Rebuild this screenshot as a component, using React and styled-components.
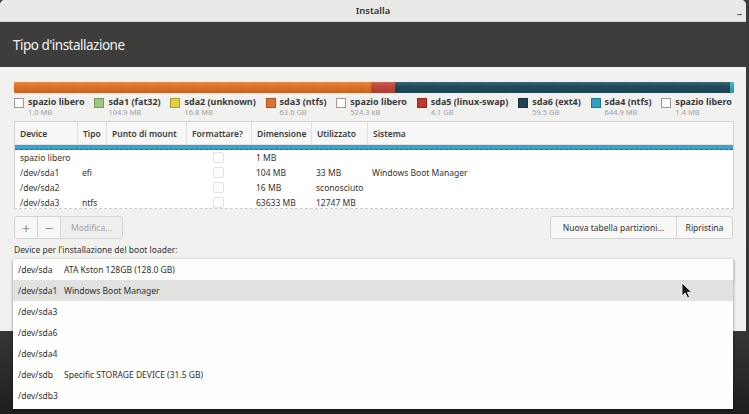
import styled, { createGlobalStyle } from "styled-components";

const GlobalStyle = createGlobalStyle`
  html, body {
    margin: 0;
    padding: 0;
    background: #2f2f2f;
    font-family: "Noto Sans", "Open Sans", sans-serif;
  }
`;

const Desktop = styled.div`
  position: relative;
  width: 749px;
  height: 414px;
  overflow: hidden;
  background: linear-gradient(180deg, #3b3b3b 0%, #363636 80%, #1e1e1e 100%);
`;

const Window = styled.div`
  width: 746px;
  height: 331px;
  overflow: hidden;
  background: #f1f1f0;
  border-radius: 5px 5px 0 0;
  display: flex;
  flex-direction: column;
`;

const TitleBar = styled.div`
  height: 22px;
  flex: none;
  position: relative;
  display: flex;
  align-items: center;
  justify-content: center;
  background: #e9e9e8;
  border-bottom: 1px solid #d4d4d4;
  box-sizing: border-box;
  font-size: 9.5px;
  font-weight: 600;
  color: #333;
`;

const MinBtn = styled.span`
  position: absolute;
  right: 4px;
  top: 7px;
  font-size: 10px;
  color: #555;
`;

const Header = styled.div`
  height: 45px;
  flex: none;
  background: #3d3d3c;
  display: flex;
  align-items: center;
  padding-left: 13px;
  color: #f3f3f3;
  font-size: 13.5px;
  letter-spacing: -0.5px;
`;

const Body = styled.div`
  padding: 15px 12px 0 14px;
  display: flex;
  flex-direction: column;
`;

const Bar = styled.div`
  height: 11px;
  width: 720px;
  display: flex;
  border-radius: 1px;
  overflow: hidden;
  position: relative;
  &::after {
    content: "";
    position: absolute;
    inset: 0;
    background:
      linear-gradient(180deg, rgba(255,255,255,0.15) 0%, rgba(255,255,255,0) 40%, rgba(0,0,0,0.12) 100%),
      repeating-linear-gradient(90deg, rgba(0,0,0,0) 0 11px, rgba(0,0,0,0.05) 11px 12px);
  }
`;

const Segment = styled.div`
  width: ${(p) => p.$w}px;
  background: ${(p) => p.$c};
  flex: none;
`;

const Legend = styled.div`
  width: 718px;
  margin-top: 4px;
  display: flex;
  justify-content: space-between;
`;

const LegendItem = styled.div`
  display: flex;
  gap: 4px;
`;

const Swatch = styled.span`
  width: 8px;
  height: 8px;
  margin-top: 1px;
  flex: none;
  background: ${(p) => p.$c};
  border: 1px solid ${(p) => (p.$c === "#fff" ? "#9a9a9a" : "rgba(0,0,0,0.25)")};
`;

const LegendText = styled.div`
  display: flex;
  flex-direction: column;
  line-height: 10px;
`;

const LegendName = styled.span`
  font-size: 9px;
  font-weight: 700;
  color: #3a3a3a;
`;

const LegendSize = styled.span`
  font-size: 7.5px;
  color: #a0a0a0;
`;

const Table = styled.div`
  margin-top: 4px;
  width: 720px;
  height: 88px;
  box-sizing: border-box;
  background: #fff;
  border: 1px solid #d3d3d3;
  border-bottom: 1px dashed #c9c9c9;
  overflow: hidden;
`;

const cols = "62px 29px 80px 65px 60px 56px 1fr";

const HeadRow = styled.div`
  display: grid;
  grid-template-columns: ${cols};
  height: 22px;
  background: #f7f7f7;
  border-bottom: 1px solid #e2e2e2;
`;

const HeadCell = styled.div`
  display: flex;
  align-items: center;
  padding-left: 5px;
  font-size: 8.5px;
  font-weight: 600;
  color: #3c3c3c;
  border-left: ${(p) => (p.$first ? "none" : "1px solid #e0e0e0")};
`;

const SelectedSliver = styled.div`
  height: 5px;
  background: #3aa2cb;
  border-bottom: 1px dashed #1f6f93;
  box-sizing: border-box;
`;

const Row = styled.div`
  display: grid;
  grid-template-columns: ${cols};
  height: 15px;
  align-items: center;
`;

const Cell = styled.div`
  padding-left: 5px;
  font-size: 8.5px;
  color: #333;
  white-space: nowrap;
`;

const CheckCell = styled.div`
  display: flex;
  justify-content: center;
`;

const Check = styled.span`
  width: 9px;
  height: 9px;
  border: 1px solid #e2e2e2;
  border-radius: 2px;
  background: #fdfdfd;
`;

const ButtonRow = styled.div`
  margin-top: 7px;
  width: 719px;
  display: flex;
  justify-content: space-between;
`;

const Group = styled.div`
  display: flex;
`;

const Btn = styled.div`
  height: 23px;
  box-sizing: border-box;
  min-width: ${(p) => p.$w || 24}px;
  padding: 0 ${(p) => (p.$w ? 7 : 0)}px;
  display: flex;
  align-items: center;
  justify-content: center;
  background: ${(p) => (p.$flat ? "#efefee" : "#f7f7f6")};
  border: 1px solid #d3d3d3;
  margin-left: -1px;
  font-size: ${(p) => (p.$sym ? 15 : 8.5)}px;
  font-weight: ${(p) => (p.$sym ? 300 : 400)};
  color: ${(p) => (p.$dim ? "#a3a3a3" : p.$sym ? "#6a6a6a" : "#333")};
  &:first-child {
    border-radius: 3px 0 0 3px;
    margin-left: 0;
  }
  &:last-child {
    border-radius: 0 3px 3px 0;
  }
`;

const Label = styled.div`
  margin-top: 5px;
  font-size: 8.5px;
  color: #333;
`;

const Combo = styled.div`
  margin-top: 4px;
  margin-left: -1px;
  width: 720px;
  height: 24px;
  background: #fff;
  border: 1px solid #d6d6d6;
  border-radius: 3px;
`;

const Popup = styled.div`
  position: absolute;
  left: 13px;
  top: 259px;
  width: 720px;
  height: 150px;
  background: #fefefd;
  box-shadow: 0 1px 3px rgba(0, 0, 0, 0.45);
  display: flex;
  flex-direction: column;
`;

const Item = styled.div`
  height: 21px;
  flex: none;
  display: flex;
  align-items: center;
  padding-left: 5px;
  font-size: 8.5px;
  color: #2f2f2f;
  background: ${(p) => (p.$hl ? "#e1e1e0" : "transparent")};
`;

const Dev = styled.span`
  width: ${(p) => (p.$wide ? 46 : "auto")}px;
  flex: none;
`;

const Cursor = styled.svg`
  position: absolute;
  left: 681px;
  top: 282px;
`;

const legend = [
  { c: "#fff", n: "spazio libero", s: "1.0 MB" },
  { c: "#9fc77f", n: "sda1 (fat32)", s: "104.9 MB" },
  { c: "#e6cf3d", n: "sda2 (unknown)", s: "16.8 MB" },
  { c: "#e0702b", n: "sda3 (ntfs)", s: "63.6 GB" },
  { c: "#fff", n: "spazio libero", s: "524.3 kB" },
  { c: "#c3362c", n: "sda5 (linux-swap)", s: "4.1 GB" },
  { c: "#1c4453", n: "sda6 (ext4)", s: "59.5 GB" },
  { c: "#2e9fc0", n: "sda4 (ntfs)", s: "644.9 MB" },
  { c: "#fff", n: "spazio libero", s: "1.4 MB" },
];

const heads = ["Device", "Tipo", "Punto di mount", "Formattare?", "Dimensione", "Utilizzato", "Sistema"];

const rows = [
  ["spazio libero", "", "", "1 MB", "", ""],
  ["/dev/sda1", "efi", "", "104 MB", "33 MB", "Windows Boot Manager"],
  ["/dev/sda2", "", "", "16 MB", "sconosciuto", ""],
  ["/dev/sda3", "ntfs", "", "63633 MB", "12747 MB", ""],
];

const devices = [
  ["/dev/sda", "ATA Kston 128GB (128.0 GB)"],
  ["/dev/sda1", "Windows Boot Manager"],
  ["/dev/sda3", ""],
  ["/dev/sda6", ""],
  ["/dev/sda4", ""],
  ["/dev/sdb", "Specific STORAGE DEVICE (31.5 GB)"],
  ["/dev/sdb3", ""],
];

export default function App() {
  return (
    <Desktop>
      <GlobalStyle />
      <Window>
        <TitleBar>
          Installa
          <MinBtn>–</MinBtn>
        </TitleBar>
        <Header>Tipo d'installazione</Header>
        <Body>
          <Bar>
            <Segment $w={357} $c="#df7229" />
            <Segment $w={24} $c="#c4473c" />
            <Segment $w={335} $c="#1f4b58" />
            <Segment $w={4} $c="#3aa5c4" />
          </Bar>
          <Legend>
            {legend.map((l, i) => (
              <LegendItem key={i}>
                <Swatch $c={l.c} />
                <LegendText>
                  <LegendName>{l.n}</LegendName>
                  <LegendSize>{l.s}</LegendSize>
                </LegendText>
              </LegendItem>
            ))}
          </Legend>
          <Table>
            <HeadRow>
              {heads.map((h, i) => (
                <HeadCell key={h} $first={i === 0}>{h}</HeadCell>
              ))}
            </HeadRow>
            <SelectedSliver />
            {rows.map((r, i) => (
              <Row key={i}>
                <Cell>{r[0]}</Cell>
                <Cell>{r[1]}</Cell>
                <Cell>{r[2]}</Cell>
                <CheckCell><Check /></CheckCell>
                <Cell>{r[3]}</Cell>
                <Cell>{r[4]}</Cell>
                <Cell>{r[5]}</Cell>
              </Row>
            ))}
          </Table>
          <ButtonRow>
            <Group>
              <Btn $sym>+</Btn>
              <Btn $sym>−</Btn>
              <Btn $w={63} $dim $flat>Modifica...</Btn>
            </Group>
            <Group>
              <Btn $w={127}>Nuova tabella partizioni...</Btn>
              <Btn $w={57}>Ripristina</Btn>
            </Group>
          </ButtonRow>
          <Label>Device per l'installazione del boot loader:</Label>
          <Combo />
        </Body>
      </Window>
      <Popup>
        {devices.map(([d, n], i) => (
          <Item key={d} $hl={i === 1}>
            <Dev $wide={!!n}>{d}</Dev>
            {n && <span>{n}</span>}
          </Item>
        ))}
      </Popup>
      <Cursor width="12" height="17" viewBox="0 0 12 17">
        <path d="M1 1 L1 14 L4.2 11 L6.6 16 L8.6 15 L6.3 10.2 L10.6 10.2 Z" fill="#111" stroke="#fff" strokeWidth="0.8" />
      </Cursor>
    </Desktop>
  );
}
